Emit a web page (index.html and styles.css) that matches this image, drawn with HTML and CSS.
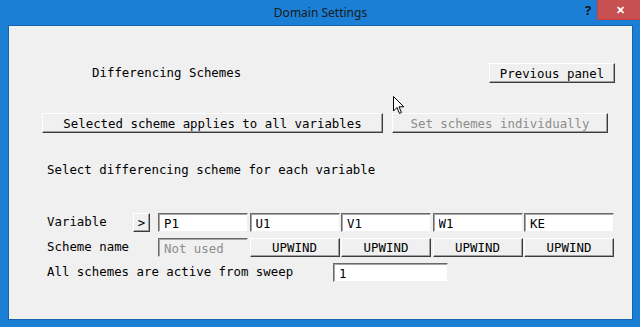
FILE: index.html
```html
<!DOCTYPE html>
<html lang="en">
<head>
    <meta charset="UTF-8">
    <title>Domain Settings</title>
    <link rel="stylesheet" href="styles.css">
</head>
<body>
<div class="window">
    <div class="titlebar">
        <span class="title">Domain Settings</span>
        <span class="help">?</span>
        <span class="close">&#x2715;</span>
    </div>

    <div class="client">
        <div class="head-row">
            <span class="heading">Differencing Schemes</span>
            <button class="btn prev">Previous panel</button>
        </div>

        <div class="mode-row">
            <button class="btn all">Selected scheme applies to all variables</button>
            <button class="btn each" disabled>Set schemes individually</button>
        </div>

        <p class="hint">Select differencing scheme for each variable</p>

        <div class="row vars">
            <span class="label">Variable</span>
            <button class="btn arrow">&gt;</button>
            <div class="cells">
                <input class="field" type="text" value="P1">
                <input class="field" type="text" value="U1">
                <input class="field" type="text" value="V1">
                <input class="field" type="text" value="W1">
                <input class="field" type="text" value="KE">
            </div>
        </div>

        <div class="row">
            <span class="label">Scheme name</span>
            <span class="spacer"></span>
            <div class="cells">
                <input class="field off" type="text" value="Not used" disabled>
                <button class="btn scheme">UPWIND</button>
                <button class="btn scheme">UPWIND</button>
                <button class="btn scheme">UPWIND</button>
                <button class="btn scheme">UPWIND</button>
            </div>
        </div>

        <div class="row">
            <span class="label wide">All schemes are active from sweep</span>
            <input class="field sweep" type="text" value="1">
        </div>
    </div>

    <!-- mouse pointer left in the capture -->
    <svg class="cursor" width="12" height="19" viewBox="0 0 12 19">
        <path d="M0.5 0.5 L0.5 15 L4 11.5 L6.5 17.5 L8.5 16.5 L6 10.8 L10.8 10.8 Z" fill="#fff" stroke="#000" stroke-width="1"/>
    </svg>
</div>
</body>
</html>
```

FILE: styles.css
```css
/* Window frame */
body {
    margin: 0;
    padding: 0;
    background-color: #1a7fd5;
}

.window {
    position: relative;
    width: 640px;
    height: 327px;
    box-sizing: border-box;
    padding: 0 7px 7px 8px;
    background-color: #1a7fd5;
    display: flex;
    flex-direction: column;
}

.titlebar {
    height: 25px;
    flex: none;
    position: relative;
    font-family: 'Noto Sans', sans-serif;
    font-size: 12px;
    color: #1a1a1a;
}

.title {
    position: absolute;
    left: 0;
    right: 0;
    top: 4px;
    text-align: center;
}

.help {
    position: absolute;
    left: 577px;
    top: 1px;
    font-weight: bold;
    font-size: 13px;
    color: #111;
}

.close {
    position: absolute;
    left: 589px;
    top: 0;
    width: 46px;
    height: 20px;
    box-sizing: border-box;
    background-color: #c75050;
    border: 1px solid #d03a3a;
    border-top: none;
    color: #fff;
    font-size: 11px;
    font-weight: bold;
    text-align: center;
    line-height: 19px;
}

/* Dialog body */
.client {
    flex: 1;
    background-color: #f0f0f0;
    border: 1px solid #1762ad;
    box-sizing: border-box;
    font-family: 'DejaVu Sans Mono', monospace;
    font-size: 12.4px;
    color: #000;
}

.btn {
    font-family: 'DejaVu Sans Mono', monospace;
    font-size: 12.4px;
    color: #000;
    background-color: #f0f0f0;
    height: 20px;
    padding: 0;
    box-sizing: border-box;
    border: 1px solid;
    border-color: #fff #3c3c3c #3c3c3c #fff;
    box-shadow: inset -1px -1px 0 #a0a0a0;
    cursor: default;
}

.btn:disabled {
    color: #8d8d8d;
}

.head-row {
    display: flex;
    align-items: center;
    margin-top: 37px;
    padding-left: 83px;
}

.heading {
    flex: 1;
    margin-top: -2px;
}

.prev {
    width: 126px;
    margin-right: 17px;
}

.mode-row {
    display: flex;
    gap: 9px;
    margin-top: 30px;
    padding-left: 33px;
}

.all {
    width: 341px;
}

.each {
    width: 216px;
}

.hint {
    margin: 28px 0 0 38px;
    height: 20px;
    line-height: 18px;
}

/* Variable table */
.row {
    display: flex;
    align-items: flex-start;
    margin-top: 6px;
    padding-left: 38px;
}

.row.vars {
    margin-top: 32px;
}

.label {
    flex: none;
    width: 86px;
    line-height: 18px;
    white-space: nowrap;
}

.label.wide {
    width: 286px;
}

.arrow {
    flex: none;
    width: 17px;
    height: 19px;
    margin-right: 8px;
}

.spacer {
    flex: none;
    width: 25px;
}

.cells {
    display: grid;
    grid-template-columns: repeat(5, 90px);
    column-gap: 1.5px;
}

.field {
    font-family: 'DejaVu Sans Mono', monospace;
    font-size: 12.4px;
    color: #000;
    width: 100%;
    height: 19px;
    box-sizing: border-box;
    padding: 1px 5px 0;
    background-color: #fff;
    border: 1px solid;
    border-color: #6a6a6a #f0f0f0 #f0f0f0 #6a6a6a;
    box-shadow: inset 1px 1px 0 #a5a5a5;
    outline: none;
}

.field.off {
    background-color: #f0f0f0;
    color: #8d8d8d;
}

.scheme {
    height: 19px;
    width: 100%;
}

.field.sweep {
    width: 115px;
}

.cursor {
    position: absolute;
    left: 393px;
    top: 96px;
}
```
